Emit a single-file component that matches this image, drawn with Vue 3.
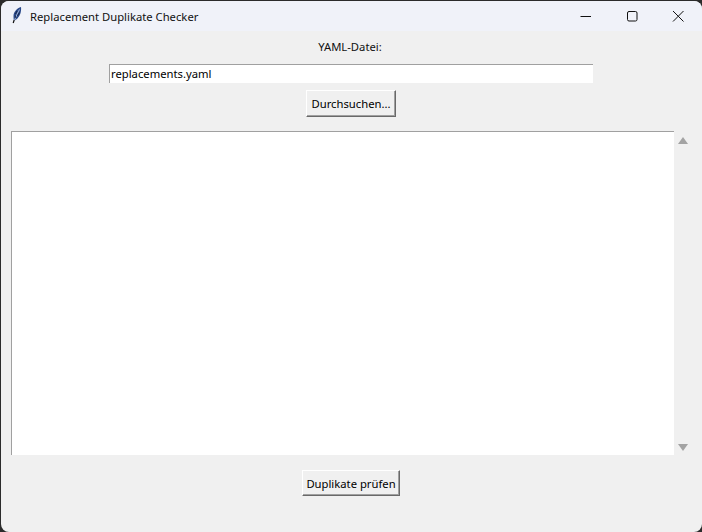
<script setup>
const title = 'Replacement Duplikate Checker'
</script>

<template>
  <div class="window">
    <header class="titlebar">
      <svg class="feather" width="12" height="20" viewBox="0 0 12 20">
        <path d="M10 1C6 2 2.500 6 2.500 10c0 2 .1 3 .5 4.500C6 14 9 10 9.800 6c.4-2 .4-3.500.2-5z" fill="#2b4a8a"/>
        <path d="M8.500 3.500C6.800 6.500 5 10 3.500 14.500" stroke="#c3d2ee" stroke-width=".8" fill="none"/>
        <path d="M6 5L4.500 8M8.500 6.500L6.500 10M4.200 9.500L4.800 12" stroke="#0e1a3a" stroke-width=".8" fill="none"/>
        <path d="M3.200 14l-1 3" stroke="#111" stroke-width="1.200"/>
      </svg>
      <span class="title">{{ title }}</span>
      <div class="controls">
        <svg class="ctl" width="46" height="30" viewBox="0 0 46 30"><path d="M17.500 15.500h10.500" stroke="#111" fill="none"/></svg>
        <svg class="ctl" width="46" height="30" viewBox="0 0 46 30"><rect x="18.500" y="10.500" width="9.500" height="9.500" rx="1.500" stroke="#111" fill="none"/></svg>
        <svg class="ctl" width="46" height="30" viewBox="0 0 46 30"><path d="M18 10l10.500 10.500M28.500 10L18 20.500" stroke="#111" fill="none"/></svg>
      </div>
    </header>
    <main class="body">
      <label class="label">YAML-Datei:</label>
      <div class="entry">replacements.yaml</div>
      <button class="btn browse">Durchsuchen...</button>
      <div class="output">
        <div class="text"></div>
        <div class="scroll">
          <span class="arrow up"></span>
          <span class="arrow down"></span>
        </div>
      </div>
      <button class="btn check">Duplikate prüfen</button>
    </main>
  </div>
</template>

<style>
html, body { margin: 0; background: #2b2b2b; }
</style>

<style scoped>
.window {
  width: 701px; height: 531px; margin-left: 1px; margin-top: 1px;
  border-radius: 8px; overflow: hidden;
  background: #f0f0f0; display: flex; flex-direction: column;
  font: 11.25px "Noto Sans", "Open Sans", sans-serif; color: #111;
}
.titlebar {
  height: 30px; flex: none; background: #f0f2f9;
  display: flex; align-items: center; padding-left: 10px;
}
.feather { flex: none; }
.title { margin-left: 7px; }
.controls { margin-left: auto; display: flex; padding-right: 1px; }
.ctl { display: block; }
.body {
  flex: 1; display: flex; flex-direction: column; align-items: center;
}
.label { margin-top: 8px; height: 17px; line-height: 15px; margin-left: -3px; }
.entry {
  width: 484px; height: 19px; margin-top: 8px; margin-left: -1px; box-sizing: border-box;
  background: #fff; border-top: 1px solid #a0a0a0; border-left: 1px solid #a0a0a0;
  padding-left: 1px; line-height: 18px; color: #000;
}
.btn {
  font: inherit; color: #000; background: #f0f0f0; padding: 0;
  border: 1px solid; border-color: #fff #696969 #696969 #fff;
  box-shadow: inset -1px -1px 0 #a0a0a0;
  display: block;
}
.browse { width: 90px; height: 27px; margin-top: 7px; margin-left: -1px; }
.output {
  display: flex; align-self: flex-start; margin-top: 14px; margin-left: 10px;
  height: 324px; width: 680px;
}
.text {
  width: 663px; box-sizing: border-box; background: #fff;
  border-top: 1px solid #a0a0a0; border-left: 1px solid #a0a0a0;
}
.scroll {
  flex: 1; display: flex; flex-direction: column; justify-content: space-between;
  align-items: center; padding: 6px 0 4px;
}
.arrow { width: 0; height: 0; border-left: 5px solid transparent; border-right: 5px solid transparent; }
.up { border-bottom: 7px solid #a3a3a3; }
.down { border-top: 7px solid #a3a3a3; }
.check { width: 98px; height: 26px; margin-top: 15px; margin-left: -1px; }
</style>
